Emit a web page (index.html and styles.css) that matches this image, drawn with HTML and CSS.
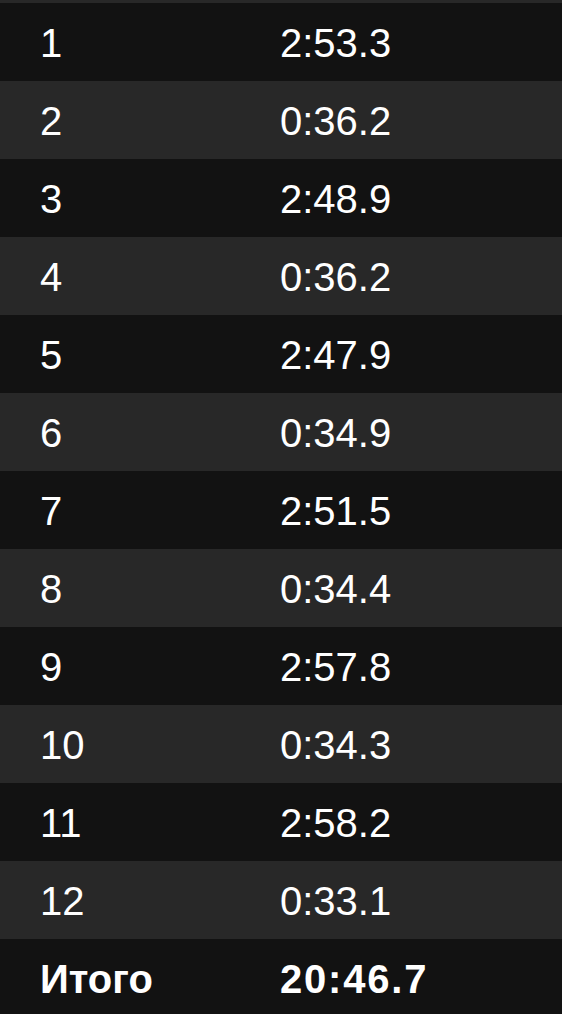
FILE: index.html
```html
<!DOCTYPE html>
<html lang="ru">
<head>
<meta charset="utf-8">
<link rel="stylesheet" href="styles.css">
</head>
<body>
<div class="table">
  <div class="row"><span class="lap">1</span><span class="time">2:53.3</span></div>
  <div class="row"><span class="lap">2</span><span class="time">0:36.2</span></div>
  <div class="row"><span class="lap">3</span><span class="time">2:48.9</span></div>
  <div class="row"><span class="lap">4</span><span class="time">0:36.2</span></div>
  <div class="row"><span class="lap">5</span><span class="time">2:47.9</span></div>
  <div class="row"><span class="lap">6</span><span class="time">0:34.9</span></div>
  <div class="row"><span class="lap">7</span><span class="time">2:51.5</span></div>
  <div class="row"><span class="lap">8</span><span class="time">0:34.4</span></div>
  <div class="row"><span class="lap">9</span><span class="time">2:57.8</span></div>
  <div class="row"><span class="lap">10</span><span class="time">0:34.3</span></div>
  <div class="row"><span class="lap">11</span><span class="time">2:58.2</span></div>
  <div class="row"><span class="lap">12</span><span class="time">0:33.1</span></div>
  <div class="row total"><span class="lap">Итого</span><span class="time">20:46.7</span></div>
</div>
</body>
</html>
```
FILE: styles.css
```css
html, body {
  margin: 0;
  padding: 0;
  background: #121212;
}
body {
  font-family: "Liberation Sans", Arial, sans-serif;
  color: #ffffff;
  overflow: hidden;
}
.table {
  display: flex;
  flex-direction: column;
  border-top: 3px solid #282828;
}
.row {
  display: grid;
  grid-template-columns: 240px 1fr;
  height: 78px;
  padding-left: 40px;
  padding-top: 1px;
  box-sizing: border-box;
  align-items: center;
  font-size: 40px;
  line-height: 1;
  background: #121212;
}
.row:nth-child(even) {
  background: #282828;
}
.total {
  font-weight: bold;
}
.total .time {
  letter-spacing: 1.8px;
}
```
